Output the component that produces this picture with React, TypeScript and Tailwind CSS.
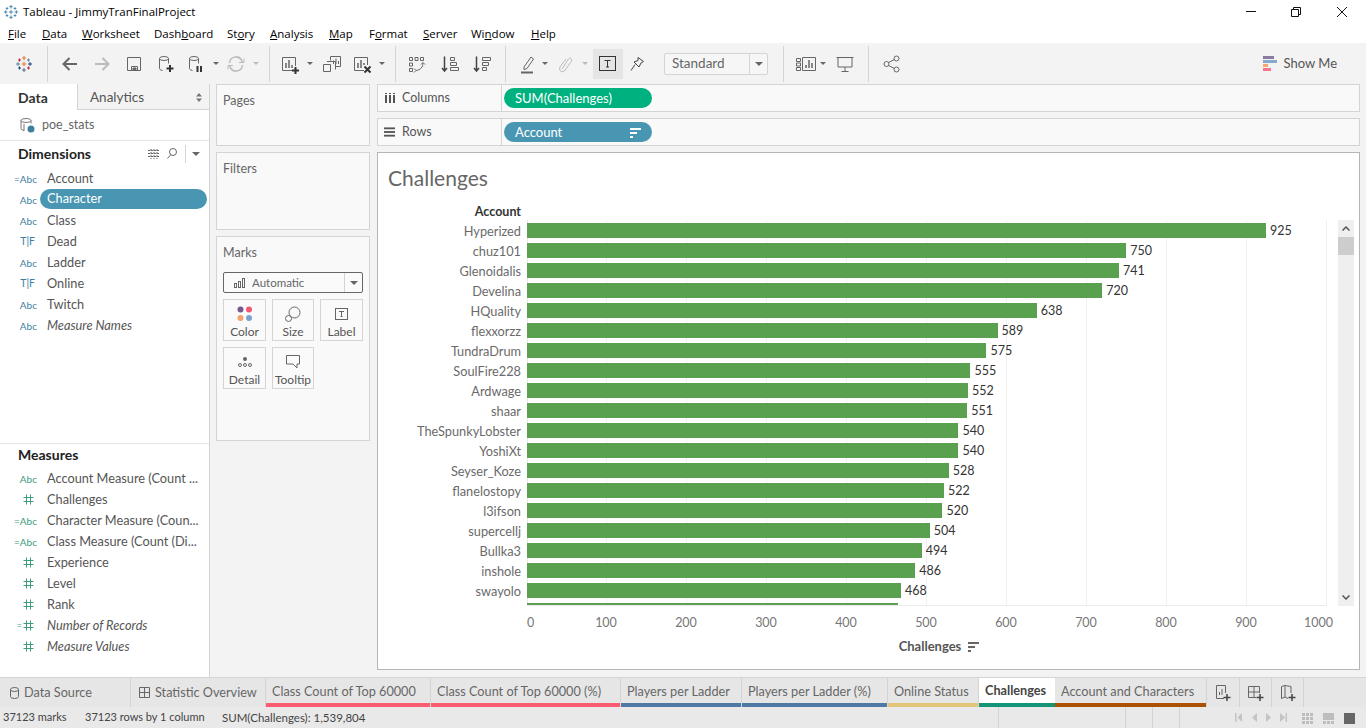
import type { ReactNode } from "react";

const menus: [string, string, string, string][] = [
  ["", "F", "ile", "w-[34px]"],
  ["", "D", "ata", "w-[40px]"],
  ["", "W", "orksheet", "w-[72px]"],
  ["Dash", "b", "oard", "w-[73px]"],
  ["St", "o", "ry", "w-[43px]"],
  ["", "A", "nalysis", "w-[59px]"],
  ["", "M", "ap", "w-[40px]"],
  ["F", "o", "rmat", "w-[54px]"],
  ["", "S", "erver", "w-[48px]"],
  ["Wi", "n", "dow", "w-[60px]"],
  ["", "H", "elp", "w-[40px]"],
];

const dimensions = [
  { type: "=Abc", name: "Account" },
  { type: "Abc", name: "Character", active: true },
  { type: "Abc", name: "Class" },
  { type: "T|F", name: "Dead" },
  { type: "Abc", name: "Ladder" },
  { type: "T|F", name: "Online" },
  { type: "Abc", name: "Twitch" },
  { type: "Abc", name: "Measure Names", italic: true },
];

const measures = [
  { type: "Abc", name: "Account Measure (Count ..." },
  { type: "#", name: "Challenges" },
  { type: "=Abc", name: "Character Measure (Coun..." },
  { type: "=Abc", name: "Class Measure (Count (Di..." },
  { type: "#", name: "Experience" },
  { type: "#", name: "Level" },
  { type: "#", name: "Rank" },
  { type: "=#", name: "Number of Records", italic: true },
  { type: "#", name: "Measure Values", italic: true },
];

const rows: [string, number][] = [
  ["Hyperized", 925],
  ["chuz101", 750],
  ["Glenoidalis", 741],
  ["Develina", 720],
  ["HQuality", 638],
  ["flexxorzz", 589],
  ["TundraDrum", 575],
  ["SoulFire228", 555],
  ["Ardwage", 552],
  ["shaar", 551],
  ["TheSpunkyLobster", 540],
  ["YoshiXt", 540],
  ["Seyser_Koze", 528],
  ["flanelostopy", 522],
  ["l3ifson", 520],
  ["supercellj", 504],
  ["Bullka3", 494],
  ["inshole", 486],
  ["swayolo", 468],
  ["Tonsid", 464],
];

const ticks = [100, 200, 300, 400, 500, 600, 700, 800, 900];

const tabs = [
  { name: "Class Count of Top 60000", w: "w-[165px]", bar: "bg-[#f95d6f]" },
  { name: "Class Count of Top 60000 (%)", w: "w-[190px]", bar: "bg-[#f95d6f]" },
  { name: "Players per Ladder", w: "w-[121px]", bar: "bg-[#4e79a7]" },
  { name: "Players per Ladder (%)", w: "w-[146px]", bar: "bg-[#4e79a7]" },
  { name: "Online Status", w: "w-[91px]", bar: "bg-[#e2c578]" },
];

const Ic = ({ w = 20, h = 20, children }: { w?: number; h?: number; children: ReactNode }) => (
  <svg width={w} height={h} viewBox={`0 0 ${w} ${h}`} fill="none" stroke="#666" strokeWidth="1">
    {children}
  </svg>
);

const Tool = ({ w, children }: { w: string; children?: ReactNode }) => (
  <div className={`flex h-[30px] shrink-0 items-center justify-center ${w}`}>{children}</div>
);

const Caret = ({ w = "w-[12px]", light = false, big = false }: { w?: string; light?: boolean; big?: boolean }) => (
  <div className={`flex shrink-0 items-center justify-center ${w}`}>
    <div
      className={`h-0 w-0 border-x-transparent ${big ? "border-x-[4px] border-t-[4px]" : "border-x-[3px] border-t-[3px]"} ${
        light ? "border-t-[#bbb]" : "border-t-[#666]"
      }`}
    />
  </div>
);

const Sep = ({ ml }: { ml: string }) => <div className={`h-[36px] w-px shrink-0 bg-[#d4d4d4] ${ml}`} />;

const TableauMark = ({ size = 18, mono = false }: { size?: number; mono?: boolean }) => {
  const plus = (x: number, y: number, r: number, c: string, k: string) => (
    <path key={k} d={`M${x - r} ${y}h${r * 2}M${x} ${y - r}v${r * 2}`} stroke={mono ? "#3f7fa6" : c} strokeWidth="1" />
  );
  return (
    <svg width={size} height={size} viewBox="0 0 18 18" fill="none">
      {plus(9, 9, 2.5, "#e8762d", "a")}
      {plus(9, 3, 2, "#e8762d", "b")}
      {plus(9, 15, 2, "#5b6f8f", "c")}
      {plus(3, 9, 2, "#59879b", "d")}
      {plus(15, 9, 2, "#1f447a", "e")}
      {plus(4.5, 5, 1.5, "#c72035", "f")}
      {plus(13.5, 5, 1.5, "#5b879b", "g")}
      {plus(4.5, 13, 1.5, "#1f447a", "h")}
      {plus(13.5, 13, 1.5, "#c72035", "i")}
    </svg>
  );
};

const TypeIcon = ({ type, green }: { type: string; green?: boolean }) => {
  const color = green ? "text-[#3c9c7c]" : "text-[#3e7f9e]";
  if (type === "#" || type === "=#") {
    return (
      <div className="flex w-[37px] shrink-0 items-center justify-end gap-[1px] pr-[3px]">
        {type === "=#" && <span className="text-[9px] leading-none text-[#3c9c7c]">=</span>}
        <svg width="11" height="11" viewBox="0 0 11 11" stroke="#3c9c7c" strokeWidth="1">
          <path d="M0.5 3.5h10M0.5 7.5h10M3.5 0.5v10M7.5 0.5v10" />
        </svg>
      </div>
    );
  }
  if (type === "T|F") {
    return <div className={`w-[37px] shrink-0 pr-[2px] text-right text-[10.5px] leading-none ${color}`}>{type}</div>;
  }
  return <div className={`w-[37px] shrink-0 text-right text-[10px] leading-none ${color}`}>{type}</div>;
};

const FieldRow = ({ type, name, italic, active, green }: { type: string; name: string; italic?: boolean; active?: boolean; green?: boolean }) => (
  <div className="flex h-[21px] items-center text-[12.75px]">
    <TypeIcon type={type} green={green} />
    {active ? (
      <div className="mb-[2px] ml-[3px] flex h-[20px] w-[167px] items-center rounded-full bg-[#4996b2] pl-[7px] pt-[1px] text-white">{name}</div>
    ) : (
      <div className={`ml-[10px] whitespace-nowrap text-[#555] ${italic ? "italic" : ""}`}>{name}</div>
    )}
  </div>
);

const MarkButton = ({ label, w, children }: { label: string; w: string; children: ReactNode }) => (
  <div className={`flex h-[42px] flex-col items-center border border-[#d4d4d4] bg-[#fafafa] pt-[4px] ${w}`}>
    <div className="flex h-[20px] items-center">{children}</div>
    <div className="text-[12px] leading-[15px] text-[#555]">{label}</div>
  </div>
);

const SortIcon = ({ color = "#666" }: { color?: string }) => (
  <svg width="11" height="10" viewBox="0 0 11 10" fill={color}>
    <rect x="0" y="0" width="11" height="2" />
    <rect x="0" y="4" width="7" height="2" />
    <rect x="0" y="8" width="3" height="2" />
  </svg>
);

const Shelf = ({ label, icon, pill, className, children }: { label: string; icon: ReactNode; pill: string; className: string; children?: ReactNode }) => (
  <div className={`flex h-[28px] border border-[#d4d4d4] bg-[#f9f9f9] ${className}`}>
    <div className="flex w-[124px] items-center gap-[7px] border-r border-[#d4d4d4] pl-[6px] text-[12.5px] text-[#555]">
      <div className="flex w-[11px] justify-center">{icon}</div>
      <span className="pt-[1px]">{label}</span>
    </div>
    <div className={`ml-[2px] mt-[3px] flex h-[20px] w-[148px] items-center justify-between rounded-full pl-[11px] pr-[11px] pt-[1px] text-[13px] text-white ${pill}`}>
      {children}
    </div>
  </div>
);

const Card = ({ title, className }: { title: string; className: string }) => (
  <div className={`border border-[#d4d4d4] bg-[#f9f9f9] px-[6px] pt-[8px] text-[12.5px] leading-[16px] text-[#666] ${className}`}>{title}</div>
);

export default function App() {
  return (
    <div className="flex h-[728px] w-[1366px] flex-col overflow-hidden bg-white font-['Lato',sans-serif] text-[13px] text-[#444]">
      {/* title bar */}
      <div className="flex h-[24px] shrink-0 items-center bg-white pl-[3px]">
        <TableauMark size={16} mono />
        <div className="ml-[4px] font-['Open_Sans',sans-serif] text-[11.5px] text-black">Tableau - JimmyTranFinalProject</div>
        <div className="ml-auto flex items-center pr-[18px]">
          <svg width="12" height="12" viewBox="0 0 12 12" stroke="#111" fill="none" className="mr-[33px]">
            <path d="M1 5.5h10" />
          </svg>
          <svg width="12" height="12" viewBox="0 0 12 12" stroke="#111" fill="none" className="mr-[34px]">
            <path d="M1.5 3.5h7v7h-7zM3.5 3.5v-2h7v7h-2" />
          </svg>
          <svg width="12" height="12" viewBox="0 0 12 12" stroke="#111" fill="none">
            <path d="M1 1l10 10M11 1L1 11" />
          </svg>
        </div>
      </div>

      {/* menu bar */}
      <div className="flex h-[19px] shrink-0 items-center pl-[8px] font-['Open_Sans',sans-serif] text-[11.5px] text-black">
        {menus.map(([pre, key, post, w]) => (
          <span key={pre + key + post} className={`shrink-0 ${w}`}>
            {pre}
            <u>{key}</u>
            {post}
          </span>
        ))}
      </div>

      {/* toolbar */}
      <div className="flex h-[41px] shrink-0 items-center bg-[#f3f3f3]">
        <Tool w="w-[47px]">
          <TableauMark size={18} />
        </Tool>
        <Sep ml="" />
        <Tool w="w-[32px] ml-[6px]">
          <Ic>
            <path d="M17 10H3.5M9.5 4l-6 6 6 6" strokeWidth="2" />
          </Ic>
        </Tool>
        <Tool w="w-[32px]">
          <Ic>
            <path d="M3 10h13.5M10.5 4l6 6-6 6" strokeWidth="2" stroke="#bbb" />
          </Ic>
        </Tool>
        <Tool w="w-[32px]">
          <Ic>
            <path d="M3.5 3.5h13v13h-13zM7.5 16.5v-4h6v4" />
            <path d="M9 14h3v2h-3z" fill="#666" />
          </Ic>
        </Tool>
        <Tool w="w-[31px]">
          <Ic>
            <ellipse cx="8" cy="4.5" rx="4.5" ry="2" />
            <path d="M3.5 4.5v10q0 1.5 3 2M12.5 4.5v5" />
            <path d="M14 11v7M10.5 14.5h7" stroke="#333" strokeWidth="2" />
          </Ic>
        </Tool>
        <Tool w="w-[29px]">
          <Ic>
            <ellipse cx="8" cy="4.5" rx="4.5" ry="2" />
            <path d="M3.5 4.5v10q0 1.5 3 2M12.5 4.5v5" />
            <path d="M11.5 12v6M15 12v6" stroke="#333" strokeWidth="2" />
          </Ic>
        </Tool>
        <Caret />
        <Tool w="w-[28px]">
          <Ic>
            <path d="M3.5 9a6.5 6.5 0 0 1 12-3l1 2M16.5 11a6.5 6.5 0 0 1-12 3l-1-2" stroke="#bbb" strokeWidth="1.5" />
            <path d="M13 8.5h5v-4M7 11.5H2v4" stroke="#bbb" />
          </Ic>
        </Tool>
        <Caret light />
        <Sep ml="ml-[7px]" />
        <Tool w="w-[28px] ml-[6px]">
          <Ic>
            <path d="M13 16.5H2.5v-13h13V12" />
            <path d="M6 14V9M9 14V6M12 14v-3" strokeWidth="1.5" />
            <path d="M15.5 13v7M12 16.5h7" stroke="#333" strokeWidth="2" />
          </Ic>
        </Tool>
        <Caret />
        <Tool w="w-[32px]">
          <Ic>
            <path d="M8.5 6.5V2.5h10v10h-5M5 7.5h8.5v8M1.5 10.5h7v7h-7z" />
            <path d="M11.5 10V6.5M14 10V4.5M16.5 10V7" />
          </Ic>
        </Tool>
        <Tool w="w-[28px]">
          <Ic>
            <path d="M12 16.5H2.5v-13h13V11" />
            <path d="M6 14V9M9 14V6M12 11V9" strokeWidth="1.5" />
            <path d="M12.5 12.5l6 6M18.5 12.5l-6 6" stroke="#333" strokeWidth="2" />
          </Ic>
        </Tool>
        <Caret />
        <Sep ml="ml-[7px]" />
        <Tool w="w-[34px] ml-[4px]">
          <Ic>
            <path d="M2.5 3.5h3v3h-3zM8 3.5h3v3H8zM13.5 3.5h3v3h-3zM2.5 9h3v3h-3zM2.5 14.5h3v3h-3z" />
            <path d="M16 9c0 4-2.5 7-7 7.5M7 14.5l2 2-2 2M14 10.5l2-2 2 2" />
          </Ic>
        </Tool>
        <Tool w="w-[32px]">
          <Ic>
            <path d="M4.5 2.5v14M2 14l2.5 3L7 14" strokeWidth="1.5" stroke="#444" />
            <path d="M10.5 3.5h4v3h-4zM10.5 8.5h6v3h-6zM10.5 13.5h8v3h-8z" />
          </Ic>
        </Tool>
        <Tool w="w-[32px]">
          <Ic>
            <path d="M4.5 2.5v14M2 14l2.5 3L7 14" strokeWidth="1.5" stroke="#444" />
            <path d="M10.5 3.5h8v3h-8zM10.5 8.5h6v3h-6zM10.5 13.5h4v3h-4z" />
          </Ic>
        </Tool>
        <Sep ml="ml-[7px]" />
        <Tool w="w-[24px] ml-[10px]">
          <Ic>
            <path d="M6 13l7-10 2.5 2-6.5 9.5-3 1z" />
            <path d="M3 18.5h12" strokeWidth="2" />
          </Ic>
        </Tool>
        <Caret w="w-[10px]" />
        <Tool w="w-[24px] ml-[3px]">
          <Ic>
            <path d="M7 15l6.5-10q2-2 3 0t-1 3.5L9.5 17q-3 2-4.5-.5t1-5L11 5" stroke="#bbb" />
          </Ic>
        </Tool>
        <Caret w="w-[10px] ml-[3px]" light />
        <div className="ml-[3px] flex h-[30px] w-[30px] shrink-0 items-center justify-center bg-[#e5e5e5]">
          <Ic w={18} h={16}>
            <rect x="0.5" y="0.5" width="16" height="14" stroke="#333" />
            <path d="M5.5 4.5h6M8.5 4.5v6.5M7 11h3" stroke="#333" />
          </Ic>
        </div>
        <Tool w="w-[28px]">
          <Ic>
            <path d="M11 3.5l5.5 4-2.5 1.5-2 4-5-5 4-1.500zM8 10.500l-4 6" stroke="#444" />
          </Ic>
        </Tool>
        <div className="ml-[13px] flex h-[22px] w-[104px] shrink-0 items-center rounded-[2px] border border-[#d4d4d4] bg-[#f6f6f6] pl-[7px] text-[13.5px] text-[#666]">
          <span className="flex-1">Standard</span>
          <div className="flex h-full w-[18px] items-center justify-center border-l border-[#d4d4d4]">
            <Caret big />
          </div>
        </div>
        <Sep ml="ml-[15px]" />
        <Tool w="w-[24px] ml-[10px]">
          <Ic w={22} h={20}>
            <path d="M1.5 4.5h4v3h-4zM1.5 9h4v3h-4zM1.5 13.5h4v3h-4zM7.5 3.5h13v13h-13z" />
            <path d="M11 14v-3M14 14V6M17 14V9" strokeWidth="1.5" />
          </Ic>
        </Tool>
        <Caret w="w-[10px]" />
        <Tool w="w-[32px] ml-[1px]">
          <Ic>
            <path d="M1.5 3.5h17M3 3.5v9.5h14V3.5M10 13v4M6.5 17.5h7" />
          </Ic>
        </Tool>
        <Sep ml="ml-[7px]" />
        <Tool w="w-[46px]">
          <Ic>
            <circle cx="4.5" cy="10" r="2.5" />
            <circle cx="14.5" cy="4.5" r="2.5" />
            <circle cx="14.5" cy="15.5" r="2.5" />
            <path d="M6.5 8.5l6-3M6.5 11.5l6 3" />
          </Ic>
        </Tool>
        <div className="ml-auto flex items-center gap-[7px] pr-[29px] text-[13px] text-[#555]">
          <svg width="14" height="16" viewBox="0 0 14 16">
            <rect x="0" y="0" width="11" height="3" fill="#8a7ba1" />
            <rect x="0" y="4" width="14" height="3" fill="#87a8cf" />
            <rect x="0" y="8" width="5" height="3" fill="#f5a76c" />
            <rect x="0" y="12" width="8" height="3" fill="#f7768a" />
          </svg>
          Show Me
        </div>
      </div>

      {/* main */}
      <div className="flex min-h-0 flex-1 bg-[#f3f3f3]">
        {/* data pane */}
        <div className="flex w-[210px] shrink-0 flex-col border-r border-[#d4d4d4] bg-white">
          <div className="flex h-[26px] shrink-0">
            <div className="flex w-[77px] items-center pl-[18px] text-[14px] font-bold text-[#333]">Data</div>
            <div className="flex flex-1 items-center justify-between border-b border-l border-[#d4d4d4] bg-[#f3f3f3] pl-[12px] pr-[7px] pt-[1px] text-[13.5px] text-[#555]">
              Analytics
              <svg width="6" height="9" viewBox="0 0 6 9" fill="#777">
                <path d="M3 0l3 3.5H0zM3 9L0 5.5h6z" />
              </svg>
            </div>
          </div>
          <div className="flex h-[31px] shrink-0 items-center gap-[6px] border-b border-[#e6e6e6] pl-[19px] text-[12.5px] text-[#666]">
            <svg width="17" height="17" viewBox="0 0 17 17" fill="none" stroke="#777">
              <ellipse cx="7" cy="3.5" rx="5" ry="2" />
              <path d="M2 3.5v8q0 1.5 3 2M12 3.5v3M5 7v7" />
              <circle cx="12" cy="12" r="3.5" fill="#3e7f9e" stroke="none" />
            </svg>
            <span className="pt-[1px]">poe_stats</span>
          </div>
          <div className="flex h-[302px] shrink-0 flex-col">
            <div className="flex h-[27px] shrink-0 items-center pb-[2px] pl-[18px]">
              <span className="text-[14px] font-bold text-[#222]">Dimensions</span>
              <div className="ml-auto flex items-center pr-[7px]">
                <svg width="12" height="10" viewBox="0 0 12 10" stroke="#666" className="mr-[7px]">
                  <path d="M0 1.5h12M0 4.5h12M0 7.5h12M3 0v10M6 0v10M9 0v10" strokeDasharray="2 1" />
                </svg>
                <svg width="10" height="11" viewBox="0 0 10 11" fill="none" stroke="#666" className="mr-[8px]">
                  <circle cx="6" cy="4" r="3.5" />
                  <path d="M3.5 7L0.5 10.5" />
                </svg>
                <div className="mr-[3px] h-[18px] w-px bg-[#d4d4d4]" />
                <Caret w="w-[13px]" big />
              </div>
            </div>
            {dimensions.map((d) => (
              <FieldRow key={d.name} {...d} />
            ))}
          </div>
          <div className="flex-1 border-t border-[#e6e6e6]">
            <div className="flex h-[24px] items-center pb-[4px] pl-[18px] text-[14px] font-bold text-[#222]">Measures</div>
            {measures.map((m) => (
              <FieldRow key={m.name} {...m} green />
            ))}
          </div>
        </div>

        {/* cards */}
        <div className="ml-[6px] flex w-[154px] shrink-0 flex-col gap-[6px]">
          <Card title="Pages" className="h-[62px]" />
          <Card title="Filters" className="h-[78px]" />
          <div className="h-[205px] border border-[#d4d4d4] bg-[#f9f9f9] px-[6px] pt-[8px]">
            <div className="text-[12.5px] leading-[16px] text-[#666]">Marks</div>
            <div className="mt-[11px] flex h-[21px] w-[140px] items-center rounded-[2px] border border-[#666] bg-[#fafafa] text-[11.5px] text-[#666]">
              <svg width="12" height="10" viewBox="0 0 12 10" fill="none" stroke="#666" className="ml-[10px] mr-[6px]">
                <rect x="0.5" y="5.5" width="2" height="4" />
                <rect x="4.5" y="3.5" width="2" height="6" />
                <rect x="8.5" y="0.5" width="2" height="9" />
              </svg>
              <span className="flex-1">Automatic</span>
              <div className="flex h-full w-[18px] items-center justify-center border-l border-[#d4d4d4]">
                <Caret big />
              </div>
            </div>
            <div className="mt-[6px] flex gap-[6px]">
              <MarkButton label="Color" w="w-[43px]">
                <svg width="16" height="16" viewBox="0 0 16 16">
                  <circle cx="3.5" cy="3.5" r="3" fill="#76598c" />
                  <circle cx="12" cy="3.5" r="3" fill="#f2596e" />
                  <circle cx="3.5" cy="12" r="3" fill="#f4a26b" />
                  <circle cx="12" cy="12" r="3" fill="#7ca3cc" />
                </svg>
              </MarkButton>
              <MarkButton label="Size" w="w-[42px]">
                <svg width="16" height="16" viewBox="0 0 16 16" fill="none" stroke="#666">
                  <circle cx="9.5" cy="6.5" r="5.5" />
                  <circle cx="3.5" cy="12.5" r="3" fill="#fafafa" />
                </svg>
              </MarkButton>
              <MarkButton label="Label" w="w-[43px]">
                <svg width="14" height="14" viewBox="0 0 14 14" fill="none" stroke="#666">
                  <rect x="0.5" y="1.5" width="12" height="11" />
                  <path d="M4 4.5h5M6.5 4.5v5M5.5 9.5h2" />
                </svg>
              </MarkButton>
            </div>
            <div className="mt-[6px] flex gap-[6px]">
              <MarkButton label="Detail" w="w-[43px]">
                <svg width="14" height="12" viewBox="0 0 14 12" fill="none" stroke="#666">
                  <circle cx="7" cy="3" r="2" fill="#666" stroke="none" />
                  <circle cx="2" cy="9" r="1.5" />
                  <circle cx="7" cy="9" r="1.5" />
                  <circle cx="12" cy="9" r="1.5" />
                </svg>
              </MarkButton>
              <MarkButton label="Tooltip" w="w-[42px]">
                <svg width="15" height="14" viewBox="0 0 15 14" fill="none" stroke="#666">
                  <path d="M0.5 0.5h13v8.5h-2.5v4l-4-4h-6.5z" />
                </svg>
              </MarkButton>
            </div>
          </div>
        </div>

        {/* shelves + view */}
        <div className="ml-[7px] flex w-[983px] shrink-0 flex-col pb-[7px]">
          <Shelf
            label="Columns"
            className=""
            pill="bg-[#00b180]"
            icon={
              <svg width="10" height="10" viewBox="0 0 10 10" fill="#555">
                <rect x="0" y="2" width="2" height="8" />
                <rect x="4" y="2" width="2" height="8" />
                <rect x="8" y="2" width="2" height="8" />
                <rect x="0" y="0" width="2" height="1" />
                <rect x="4" y="0" width="2" height="1" />
                <rect x="8" y="0" width="2" height="1" />
              </svg>
            }
          >
            SUM(Challenges)
          </Shelf>
          <Shelf
            label="Rows"
            className="mt-[6px]"
            pill="bg-[#4996b2]"
            icon={
              <svg width="12" height="10" viewBox="0 0 12 10" fill="#555">
                <rect x="0" y="0" width="12" height="2" />
                <rect x="0" y="4" width="12" height="2" />
                <rect x="0" y="8" width="12" height="2" />
              </svg>
            }
          >
            Account
            <SortIcon color="#fff" />
          </Shelf>

          <div className="mt-[6px] flex min-h-0 flex-1 flex-col border border-[#b5b5b5] bg-white">
            <div className="h-[52px] shrink-0 pl-[10px] pt-[12px] text-[21px] leading-[26px] text-[#666]">Challenges</div>
            <div className="flex h-[15px] shrink-0">
              <div className="w-[143px] text-right text-[12.5px] font-bold leading-[13px] text-[#333]">Account</div>
            </div>
            <div className="flex h-[386px] shrink-0">
              <div className="w-[144px] shrink-0 overflow-hidden pr-px pt-[1px] text-right text-[12.75px] text-[#6a6a6a]">
                {rows.map(([name]) => (
                  <div key={name} className="h-[20px] leading-[20px]">
                    {name}
                  </div>
                ))}
              </div>
              <div className="relative ml-[5px] w-[800px] shrink-0 overflow-hidden">
                <div className="absolute inset-y-0 left-0 w-px bg-[#e6e6e6]" />
                {ticks.concat(1000).map((t) => (
                  <div key={t} className="absolute inset-y-0 w-px bg-[#f0f0f0]" style={{ left: t * 0.8 - 1 }} />
                ))}
                {rows.map(([name, value]) => (
                  <div key={name} className="relative flex h-[20px] items-start pt-[3px]">
                    <div className="h-[15px] bg-[#59a14f]" style={{ width: value * 0.799 }} />
                    <span className="ml-[4px] text-[12.5px] leading-[15px] text-[#333]">{value}</span>
                  </div>
                ))}
                <div className="absolute inset-x-0 bottom-0 h-px bg-[#ececec]" />
              </div>
              <div className="ml-[11px] flex w-[16px] shrink-0 flex-col bg-[#efefef]">
                <div className="flex h-[17px] items-center justify-center">
                  <svg width="8" height="5" viewBox="0 0 8 5" fill="none" stroke="#555" strokeWidth="1.5">
                    <path d="M0.5 4.5L4 1l3.5 3.5" />
                  </svg>
                </div>
                <div className="h-[18px] bg-[#cdcdcd]" />
                <div className="mt-auto flex h-[17px] items-center justify-center">
                  <svg width="8" height="5" viewBox="0 0 8 5" fill="none" stroke="#555" strokeWidth="1.5">
                    <path d="M0.5 0.5L4 4l3.5-3.5" />
                  </svg>
                </div>
              </div>
            </div>
            <div className="flex h-[25px] shrink-0 items-end pl-[148px] text-[12.5px] leading-[16px] text-[#777]">
              <span className="w-[40px] shrink-0 pl-[1px]">0</span>
              {ticks.map((t) => (
                <span key={t} className="w-[80px] shrink-0 text-center">
                  {t}
                </span>
              ))}
              <span className="ml-[18px] w-[30px] shrink-0 text-left">1000</span>
            </div>
            <div className="flex flex-1 items-center justify-center gap-[7px] pb-[7px] pl-[141px] text-[13px] font-bold text-[#555]">
              Challenges
              <SortIcon />
            </div>
          </div>
        </div>
      </div>

      {/* sheet tabs */}
      <div className="flex h-[30px] shrink-0 border-t border-[#d4d4d4] bg-[#e6e6e6] text-[12.7px] text-[#666]">
        <div className="flex w-[131px] items-center gap-[5px] border-r border-[#d4d4d4] pl-[10px]">
          <svg width="9" height="12" viewBox="0 0 9 12" fill="none" stroke="#666">
            <ellipse cx="4.5" cy="2.5" rx="4" ry="2" />
            <path d="M0.5 2.5v7q0 2 4 2t4-2v-7" />
          </svg>
          Data Source
        </div>
        <div className="flex w-[135px] items-center gap-[5px] border-r border-[#d4d4d4] pl-[8px]">
          <svg width="11" height="11" viewBox="0 0 11 11" fill="none" stroke="#666">
            <path d="M0.5 0.5h10v10h-10zM0.5 5.5h10M5.5 0.5v10" />
          </svg>
          Statistic Overview
        </div>
        {tabs.map((t) => (
          <div key={t.name} className={`flex shrink-0 flex-col border-r border-[#d4d4d4] ${t.w}`}>
            <div className="flex flex-1 items-center pl-[6px] pt-[3px]">{t.name}</div>
            <div className={`h-[4px] ${t.bar}`} />
          </div>
        ))}
        <div className="flex w-[76px] shrink-0 flex-col bg-white">
          <div className="flex flex-1 items-center pl-[6px] pt-[1px] font-bold text-[#444]">Challenges</div>
          <div className="h-[4px] bg-[#149579]" />
        </div>
        <div className="flex w-[152px] shrink-0 flex-col border-r border-[#d4d4d4]">
          <div className="flex flex-1 items-center pl-[6px] pt-[3px]">Account and Characters</div>
          <div className="h-[4px] bg-[#ab5200]" />
        </div>
        <div className="flex w-[33px] shrink-0 items-center justify-center border-r border-[#d4d4d4]">
          <Ic w={18} h={18}>
            <path d="M10 14.5H2.5v-13h9V9" />
            <path d="M5.5 11V8M8 11V5" />
            <path d="M13 10v7M9.5 13.5h7" stroke="#444" strokeWidth="1.5" />
          </Ic>
        </div>
        <div className="flex w-[32px] shrink-0 items-center justify-center border-r border-[#d4d4d4]">
          <Ic w={18} h={18}>
            <path d="M9 13.5H1.5v-11h11V9M1.5 8h11M7 2.5v11" />
            <path d="M13 10v7M9.5 13.5h7" stroke="#444" strokeWidth="1.5" />
          </Ic>
        </div>
        <div className="flex w-[32px] shrink-0 items-center justify-center border-r border-[#d4d4d4]">
          <Ic w={18} h={18}>
            <path d="M9 14.5l-3-1.5-3.5 1.5v-12l3.5-1 6 1V9M6 1.5v11.5" />
            <path d="M13 10v7M9.5 13.5h7" stroke="#444" strokeWidth="1.5" />
          </Ic>
        </div>
      </div>

      {/* status bar */}
      <div className="flex h-[21px] shrink-0 items-center bg-[#e9e9e9] text-[11px] text-[#444]">
        <div className="flex w-[999px] shrink-0 items-center self-stretch border-r border-[#d4d4d4] pl-[3px]">
          <span className="w-[82px]">37123 marks</span>
          <span className="w-[137px]">37123 rows by 1 column</span>
          <span className="text-[11.5px]">SUM(Challenges): 1,539,804</span>
        </div>
        <div className="w-[127px] shrink-0 self-stretch border-r border-[#d4d4d4]" />
        <div className="w-[27px] shrink-0 self-stretch border-r border-[#d4d4d4]" />
        <div className="w-[27px] shrink-0 self-stretch border-r border-[#d4d4d4]" />
        <div className="ml-[55px] flex items-center gap-[8px]">
          <svg width="52" height="9" viewBox="0 0 52 9" fill="#c4c4c4">
            <path d="M0 0h1.5v9H0zM7 0v9L2.5 4.5zM22 0v9l-5-4.5zM31 0v9l5-4.5zM45 0v9l5-4.5zM50.5 0H52v9h-1.5z" />
          </svg>
          <svg className="ml-[7px]" width="53" height="14" viewBox="0 0 53 14">
            <g fill="#bdbdbd">
              <rect x="0" y="2" width="3" height="3" />
              <rect x="4" y="2" width="3" height="3" />
              <rect x="8" y="2" width="3" height="3" />
              <rect x="0" y="6" width="3" height="3" />
              <rect x="4" y="6" width="3" height="3" />
              <rect x="8" y="6" width="3" height="3" />
              <rect x="0" y="10" width="3" height="3" />
              <rect x="4" y="10" width="3" height="3" />
              <rect x="8" y="10" width="3" height="3" />
              <rect x="21" y="2" width="11" height="7" />
              <rect x="21" y="10" width="3" height="3" />
              <rect x="25" y="10" width="3" height="3" />
              <rect x="29" y="10" width="3" height="3" />
            </g>
            <rect x="42" y="2" width="11" height="11" fill="#666" />
          </svg>
        </div>
      </div>
    </div>
  );
}
